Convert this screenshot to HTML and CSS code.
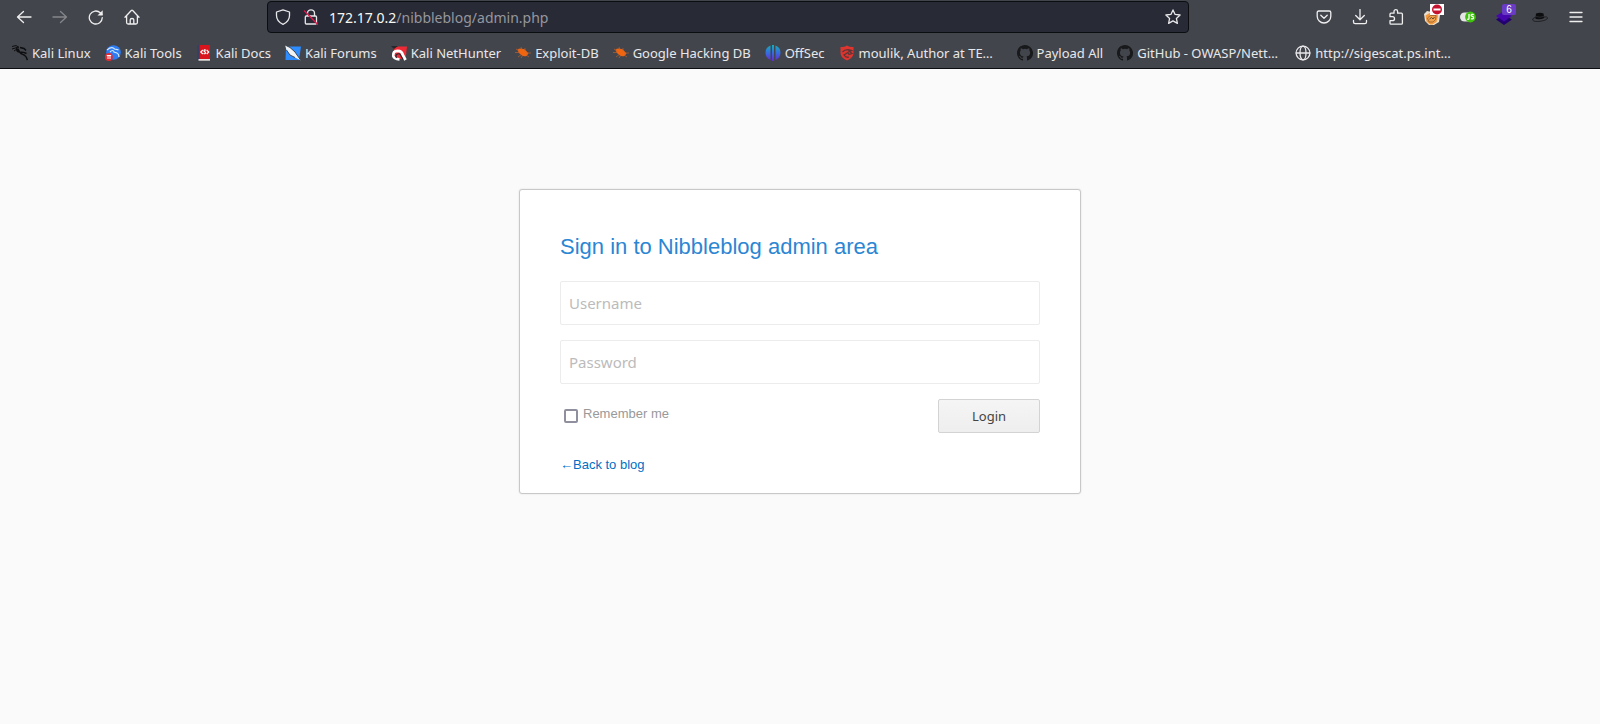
FILE: index.html
```html
<!DOCTYPE html>
<html lang="en">
<head>
<meta charset="utf-8">
<title>Nibbleblog admin</title>
<link rel="stylesheet" href="styles.css">
</head>
<body>
<header class="browser">
  <div class="toolbar">
    <button class="tool" type="button" aria-label="Back"><svg class="icon line" viewBox="0 0 16 16"><path d="M15 8H1.5M7.5 2.5 1.5 8l6 5.500"/></svg></button>
    <button class="tool" type="button" aria-label="Forward" disabled><svg class="icon line" viewBox="0 0 16 16"><path d="M1 8h13.500M8.500 2.500l6 5.500-6 5.500"/></svg></button>
    <button class="tool" type="button" aria-label="Reload"><svg class="icon line" viewBox="0 0 16 16"><path d="M14.300 8.600A6.500 6.500 0 1 1 12.300 3.800l1.600 1.500"/><path d="M14.700 1.200v5.200H9.500z" fill="currentColor" stroke="none"/></svg></button>
    <button class="tool" type="button" aria-label="Home"><svg class="icon line" viewBox="0 0 16 16"><path d="M1 8.200 7.300 1.500q.7-.7 1.400 0L15 8.200M2.600 6.800v6.700q0 1.500 1.500 1.500h7.800q1.500 0 1.500-1.500V6.800M6.200 15v-4.200q0-1.300 1.800-1.300t1.800 1.300V15"/></svg></button>
    <div class="spacer"></div>
    <div class="urlbar">
      <svg class="icon line" viewBox="0 0 16 16"><path d="M8 .8 14.500 3v3.500c0 4-2.500 7-6.500 8.800C4 13.500 1.500 10.500 1.500 6.500V3z"/></svg>
      <svg class="icon line lock" viewBox="0 0 16 16"><path d="M4.500 7V4.300a3.500 3.500 0 0 1 7 0V7M4 7h8.500q1 0 1 1v6q0 1-1 1H3.300q-1 0-1-1V8q0-1 1-1z"/><path class="slash" d="M1.500 2 14.500 15.300"/></svg>
      <div class="address"><span class="host">172.17.0.2</span>/nibbleblog/admin.php</div>
      <svg class="icon line" viewBox="0 0 16 16"><path d="M8 .9 10.100 5.400l5 .6-3.700 3.400 1 5L8 11.900l-4.400 2.500 1-5L.9 6l5-.6z"/></svg>
    </div>
    <div class="spacer"></div>
    <button class="tool" type="button" aria-label="Save to Pocket"><svg class="icon line" viewBox="0 0 16 16"><path d="M2.800 2h10.400q1.600 0 1.600 1.600v3.600a6.800 6.800 0 0 1-13.600 0V3.600Q1.200 2 2.800 2zM4.800 6.300 8 9.300l3.200-3"/></svg></button>
    <button class="tool" type="button" aria-label="Downloads"><svg class="icon line" viewBox="0 0 16 16"><path d="M8 .5v10M3.700 6.500 8 10.700l4.300-4.200M1.500 11.500v1.500q0 1.700 1.700 1.700h9.600q1.700 0 1.700-1.700v-1.500"/></svg></button>
    <button class="tool" type="button" aria-label="Extensions"><svg class="icon line" viewBox="0 0 16 16"><path d="M2 5.200q0-1 1-1h3V2.500a1.800 1.800 0 0 1 3.600 0v1.700h3.800q1 0 1 1v9q0 1-1 1H3q-1 0-1-1v-2.500h2.500a2 2 0 0 0 0-4H2z"/></svg></button>
    <button class="tool" type="button" aria-label="FoxyProxy"><svg class="icon" viewBox="0 0 16 16"><path d="m0 5 3-3 5 1 5-1 3 4-1 7-5 3H5l-4-4z" fill="#eadfce"/><path d="m1.500 6.500 4-2.500h7l1.500 3-1.500 6-4 2.500H6l-3.500-3z" fill="#f39a3f"/><path d="m3.500 9 3-2.500h5.500l-.5 4-2.500 2.500H5z" fill="#f0a24e" stroke="#8a5a2b" stroke-width=".7"/><path d="m5.500 10 2-1.500L9 10l1.500-2" fill="none" stroke="#5a3c22" stroke-width=".9"/></svg><svg class="blocked" viewBox="0 0 14 11"><path fill="#fff" d="M0 0h14v11H0z"/><circle cx="7" cy="5.500" r="5" fill="#c4122f"/><path fill="#fff" d="M3.500 4.500h7v2h-7z"/></svg></button>
    <button class="tool" type="button" aria-label="JavaScript toggle"><svg class="icon" viewBox="0 0 16 16"><rect x="0" y="3.500" width="14" height="9" rx="4.500" fill="#e4e4e4"/><circle cx="10.500" cy="8" r="5.400" fill="#3fc20d"/><path d="M9 5V9.300q0 1.400-1.900.9M13.700 5.600q-2.400-.9-2.600.7c0 1.400 2.500.9 2.500 2.400q-.2 1.700-2.700.9" fill="none" stroke="#fff" stroke-width="1.300"/></svg></button>
    <button class="tool" type="button" aria-label="Wappalyzer"><svg class="icon" viewBox="0 0 16 16"><path d="m8 5.500 8 5-8 5.500-8-5.500z" fill="#22006f"/><path d="m8 2 8 5-8 5.500L0 7z" fill="#4608ad"/></svg><span class="count">6</span></button>
    <button class="tool" type="button" aria-label="Hat"><svg class="icon" viewBox="0 0 16 16"><path d="M4 8Q0 9.500.6 11q1.400 2 7.400 1.300 7-1 7.700-3.500Q15.700 7.500 12 8" fill="none" stroke="#1b1c1f" stroke-width=".9"/><path d="M4 4.500q4-1.400 7.500 0l.7 4.500q-4 2.300-8.700.7z" fill="#0c0d0f"/><path d="M4 7.500q4 1.500 8-.2" fill="none" stroke="#3c3d41" stroke-width=".6"/></svg></button>
    <button class="tool" type="button" aria-label="Menu"><svg class="icon line" viewBox="0 0 16 16"><path d="M2 3.500h12M2 8h12M2 12.500h12"/></svg></button>
  </div>
  <nav class="bookmarks" aria-label="Bookmarks">
    <a class="bookmark" href="#"><svg class="icon" viewBox="0 0 16 16"><path d="M0 1.500 4 .6l3 1.600M0 4l5-1.500 2 .5M2 6l3-2" fill="none" stroke="#0d0e10"/><path d="M5 3Q4 7 8 7t6.500 1.500M6 4q1.500 4 4 5c2 .8 4.500 1.500 5.300 6M8 2.500l4 1 2 2" fill="none" stroke="#0d0e10" stroke-width="1.500"/></svg><span>Kali Linux</span></a>
    <a class="bookmark" href="#"><svg class="icon" viewBox="0 0 16 16"><circle cx="8.500" cy="7.500" r="7.300" fill="#2c7cf3"/><path d="M2 5q5-4 7.500-1l4 .8M5 7q3-3 4 0l3 1q2 1 2 4" fill="none" stroke="#d6e7ff" stroke-width="1.200"/><circle cx="3.900" cy="12" r="3.900" fill="#e52b33"/><path d="M1.800 10.500h4.400M3 10.500V14M5 10.500V14" stroke="#fff"/></svg><span>Kali Tools</span></a>
    <a class="bookmark" href="#"><svg class="icon" viewBox="0 0 16 16"><path d="M2 0h12v14H2z" fill="#d9141c"/><path d="M1.500 0h2v15.500h-2z" fill="#343f63"/><path d="M2.500 14H14v1.700H2.500z" fill="#e5dfdf"/><path d="M6.800 5 4.800 7l2 2M10.700 5l2 2-2 2M10 5.200q-2-1-2 .8l1.500 1.500q0 1.800-2 1" fill="none" stroke="#fff" stroke-width="1.200"/></svg><span>Kali Docs</span></a>
    <a class="bookmark" href="#"><svg class="icon" viewBox="0 0 16 16"><path d="M1 1.500h15L14 15H.5z" fill="#2d8cff"/><path d="m0 0 5 2.500L10 7l2 3 4 5.500-6-3L5 10 1.500 5z" fill="#f1f2f4"/><path d="m0 0 5 2.500L10 7l2 3 4 5.500M1.500 5 5 10l5 2.500" fill="none" stroke="#363b43" stroke-width=".9"/></svg><span>Kali Forums</span></a>
    <a class="bookmark" href="#"><svg class="icon" viewBox="0 0 16 16"><path d="M3 1.500h13L14.500 14H3z" fill="#ed2936"/><path d="M0 1h7L3 4z" fill="#24272c"/><path d="M8.500 14.300Q3 14 2.300 11q-.5-5 4.200-5.200Q11 5.800 11.800 10l2.700 5" fill="none" stroke="#fff" stroke-width="2.800"/><path d="M5.500 13q-1.500-3 1-4t3.500 2l2 3.500" fill="none" stroke="#26282d" stroke-width="1.200"/></svg><span>Kali NetHunter</span></a>
    <a class="bookmark" href="#"><svg class="icon" viewBox="0 0 16 16"><path d="M2.500 5Q4 3 7 3.800q3 0 4 2l2.500 2.700-2 2.500q-2.500 1-5-.7Q3.500 8.500 2.500 5z" fill="#ef6510"/><path d="M0 7.500h5M1 4l4 2M6 2l1 3M10 3v3M11 8h5M3 12l4-3M6 13l2-3M11 10l3 2" stroke="#c9652b" stroke-width=".6"/></svg><span>Exploit-DB</span></a>
    <a class="bookmark" href="#"><svg class="icon" viewBox="0 0 16 16"><path d="M2.500 5Q4 3 7 3.800q3 0 4 2l2.500 2.700-2 2.500q-2.500 1-5-.7Q3.500 8.500 2.500 5z" fill="#ef6510"/><path d="M0 7.500h5M1 4l4 2M6 2l1 3M10 3v3M11 8h5M3 12l4-3M6 13l2-3M11 10l3 2" stroke="#c9652b" stroke-width=".6"/></svg><span>Google Hacking DB</span></a>
    <a class="bookmark" href="#"><svg class="icon" viewBox="0 0 16 16"><defs><linearGradient id="offsec" x2="0" y2="1"><stop stop-color="#18aeb7"/><stop offset=".5" stop-color="#366ce0"/><stop offset="1" stop-color="#6929cf"/></linearGradient></defs><path d="M5.500.6v14.300A7.600 7.600 0 0 1 5.500.6zM7 0h2v16H7zM10.500.6v14.300A7.600 7.600 0 0 0 10.500.6z" fill="url(#offsec)"/></svg><span>OffSec</span></a>
    <a class="bookmark wide" href="#"><svg class="icon" viewBox="0 0 16 16"><path d="M1.500 2Q5 2.500 8 .5q3 2 6.500 1.500v6q0 5-6.500 7.500Q1.500 13 1.500 8z" fill="#e0352f"/><path d="M3.500 7Q7 3 12.500 5.500L10 6l3 2.500-3 1-1-2-4 2.500q2 3 5 2" fill="none" stroke="#5c3538" stroke-width="1.300"/></svg><span>moulik, Author at TE…</span></a>
    <a class="bookmark" href="#"><svg class="icon" viewBox="0 0 16 16"><path class="github" d="M8 0C3.580 0 0 3.580 0 8c0 3.540 2.290 6.530 5.470 7.590.4.070.55-.17.55-.38v-1.490c-2.010.37-2.530-.49-2.690-.94-.09-.23-.48-.94-.82-1.130-.28-.15-.68-.52-.01-.53.63-.01 1.080.58 1.230.82.72 1.210 1.870.87 2.330.66.070-.52.28-.87.51-1.070-1.780-.2-3.640-.89-3.640-3.950 0-.87.31-1.590.82-2.150-.08-.2-.36-1.020.08-2.120 0 0 .67-.21 2.200.82a7.700 7.700 0 0 1 4 0c1.530-1.040 2.200-.82 2.200-.82.44 1.100.16 1.920.08 2.120.51.56.82 1.270.82 2.150 0 3.070-1.870 3.750-3.650 3.950.29.25.54.73.54 1.480v2.200c0 .21.15.46.55.38A8 8 0 0 0 8 0z"/></svg><span>Payload All</span></a>
    <a class="bookmark wide" href="#"><svg class="icon" viewBox="0 0 16 16"><path class="github" d="M8 0C3.580 0 0 3.580 0 8c0 3.540 2.290 6.530 5.470 7.590.4.070.55-.17.55-.38v-1.490c-2.010.37-2.530-.49-2.690-.94-.09-.23-.48-.94-.82-1.130-.28-.15-.68-.52-.01-.53.63-.01 1.080.58 1.230.82.72 1.210 1.870.87 2.330.66.070-.52.28-.87.51-1.070-1.780-.2-3.640-.89-3.640-3.950 0-.87.31-1.590.82-2.150-.08-.2-.36-1.020.08-2.120 0 0 .67-.21 2.200.82a7.700 7.700 0 0 1 4 0c1.530-1.040 2.200-.82 2.200-.82.44 1.100.16 1.920.08 2.120.51.56.82 1.270.82 2.150 0 3.070-1.870 3.750-3.650 3.950.29.25.54.73.54 1.480v2.200c0 .21.15.46.55.38A8 8 0 0 0 8 0z"/></svg><span>GitHub - OWASP/Nett…</span></a>
    <a class="bookmark" href="#"><svg class="icon line" viewBox="0 0 16 16"><circle cx="8" cy="8" r="6.900"/><ellipse cx="8" cy="8" rx="3" ry="6.900"/><path d="M1.200 8h13.600"/></svg><span>http://sigescat.ps.int…</span></a>
  </nav>
</header>
<main class="page">
  <form class="card">
    <h1 class="title">Sign in to Nibbleblog admin area</h1>
    <input class="field" type="text" placeholder="Username" aria-label="Username">
    <input class="field" type="password" placeholder="Password" aria-label="Password">
    <div class="actions">
      <div class="remember">
        <input class="check" type="checkbox" id="remember">
        <label for="remember">Remember me</label>
      </div>
      <button class="login" type="submit">Login</button>
    </div>
    <a class="back" href="#">←Back to blog</a>
  </form>
</main>
</body>
</html>
```

FILE: styles.css
```css
* { box-sizing: border-box; }

body {
  margin: 0;
  background: #fafafa;
  font-family: "Liberation Sans", Arial, sans-serif;
  font-size: 13px;
}

.browser {
  background: #43454c;
  border-bottom: 1px solid #0c0d11;
  color: #e8e8ea;
  font-family: "Noto Sans", sans-serif;
}

.toolbar {
  display: flex;
  align-items: center;
  height: 36px;
  padding: 0 6px 2px;
}

.tool {
  position: relative;
  display: flex;
  align-items: center;
  justify-content: center;
  flex: none;
  width: 36px;
  height: 32px;
  padding: 0;
  border: 0;
  background: none;
  color: #efeff0;
}

.tool:disabled { color: #85868b; }

.icon {
  display: block;
  flex: none;
  width: 16px;
  height: 16px;
}

.line {
  fill: none;
  stroke: currentColor;
  stroke-width: 1.3;
  stroke-linecap: round;
  stroke-linejoin: round;
}

.slash { stroke: #e2184b; }
.github { fill: #18191b; }

.spacer { flex: 0 1 117px; }

.urlbar {
  display: flex;
  align-items: center;
  flex: 1;
  height: 32px;
  padding: 0 7px;
  border: 1px solid #0c0d11;
  border-radius: 4px;
  background: #282a36;
}

.lock { margin-left: 12px; }

.address {
  flex: 1;
  margin-left: 10px;
  color: #96979d;
  font-size: 14px;
}

.host { color: #f8f8f2; }

.blocked {
  position: absolute;
  top: 3px;
  right: 6px;
  width: 14px;
  height: 11px;
}

.count {
  position: absolute;
  top: 3px;
  right: 6px;
  width: 14px;
  border-radius: 2px;
  background: #6a3bc4;
  color: #fff;
  font-size: 10px;
  line-height: 11px;
  text-align: center;
}

.bookmarks {
  display: flex;
  gap: 14px;
  height: 32px;
  padding: 2px 12px 0;
  align-items: center;
  overflow: hidden;
}

.bookmark {
  display: flex;
  align-items: center;
  gap: 4px;
  color: inherit;
  text-decoration: none;
  white-space: nowrap;
}

.wide { min-width: 164px; }

.page {
  display: flex;
  justify-content: center;
  padding: 120px 16px;
}

.card {
  display: flex;
  flex-direction: column;
  width: 100%;
  max-width: 562px;
  padding: 40px 40px 18px;
  border: 1px solid #c8c8c8;
  border-radius: 3px;
  background: #fff;
  box-shadow: 0 0 2px #ddd;
}

.title {
  margin: 0 0 17px;
  color: #2b86d3;
  font-size: 22px;
  font-weight: 400;
  line-height: 34px;
}

.field {
  height: 44px;
  margin: 0 0 15px;
  padding: 0 8px;
  border: 1px solid #ececec;
  border-radius: 2px;
  background: #fff;
  font-family: "Noto Sans", sans-serif;
  font-size: 15px;
}

.field::placeholder { color: #bbb; }

.actions {
  display: flex;
  justify-content: space-between;
  margin-bottom: 22px;
}

.remember {
  display: flex;
  align-items: flex-start;
  gap: 5px;
  padding-left: 4px;
  color: #999;
  line-height: 30px;
}

.check {
  appearance: none;
  width: 14px;
  height: 14px;
  margin: 10px 0 0;
  border: 2px solid #8f8f9d;
  border-radius: 2px;
  background: #fff;
}

.login {
  width: 102px;
  height: 34px;
  border: 1px solid #d3d3d3;
  border-radius: 2px;
  background: linear-gradient(#f5f5f5, #eee);
  color: #444;
  font-family: "Noto Sans", sans-serif;
  font-size: 13px;
}

.back {
  align-self: flex-start;
  color: #006fc6;
  line-height: 20px;
  text-decoration: none;
}
```
